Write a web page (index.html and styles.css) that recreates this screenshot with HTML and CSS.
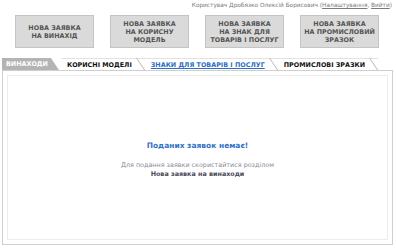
FILE: index.html
```html
<!DOCTYPE html>
<html lang="uk">
<head>
    <meta charset="UTF-8">
    <title>Заявки</title>
    <link rel="stylesheet" href="styles.css">
</head>
<body>
    <!-- шапка користувача -->
    <div class="user-bar">
        Користувач Дробязко Олексій Борисович (<a href="#">Налаштування</a>, <a href="#">Вийти</a>)
    </div>

    <!-- кнопки нових заявок -->
    <div class="new-buttons">
        <a class="new-btn" href="#">Нова заявка<br>на винахід</a>
        <a class="new-btn" href="#">Нова заявка<br>на корисну<br>модель</a>
        <a class="new-btn" href="#">Нова заявка<br>на знак для<br>товарів і послуг</a>
        <a class="new-btn" href="#">Нова заявка<br>на промисловий<br>зразок</a>
    </div>

    <!-- вкладки -->
    <div class="tabs">
        <span class="tab active">Винаходи</span>
        <span class="tab">Корисні моделі</span>
        <a class="tab link" href="#">Знаки для товарів і послуг</a>
        <span class="tab">Промислові зразки</span>
    </div>

    <div class="panel">
        <div class="empty-title">Поданих заявок немає!</div>
        <div class="empty-hint">Для подання заявки скористайтися розділом</div>
        <div class="empty-link">Нова заявка на винаходи</div>
    </div>
</body>
</html>
```

FILE: styles.css
```css
body {
    margin: 0;
    background: #fff;
    font-family: "DejaVu Sans", Verdana, sans-serif;
    width: 396px;
    height: 248px;
    overflow: hidden;
}

/* шапка */
.user-bar {
    text-align: right;
    font-size: 5.8px;
    color: #7a7a7a;
    padding: 1px 4px 0 0;
    line-height: 8px;
}

.user-bar a {
    color: #7a7a7a;
}

/* кнопки */
.new-buttons {
    display: flex;
    justify-content: center;
    gap: 16px;
    margin-top: 6px;
    padding-right: 2px;
}

.new-btn {
    width: 77px;
    height: 31px;
    display: flex;
    align-items: center;
    justify-content: center;
    text-align: center;
    background: #dadada;
    border: 1px solid #c4c4c4;
    color: #555;
    font-size: 6.4px;
    font-weight: bold;
    line-height: 8px;
    text-transform: uppercase;
    text-decoration: none;
}

/* вкладки */
.tabs {
    display: flex;
    margin: 10px 0 0 2px;
    height: 12px;
}

.tab {
    position: relative;
    font-size: 6.4px;
    font-weight: bold;
    text-transform: uppercase;
    color: #111;
    line-height: 12px;
    padding: 0 13px 0 6px;
    border-top: 1px solid #e2e2e2;
    box-sizing: border-box;
    text-decoration: none;
    white-space: nowrap;
}

.tab::after {
    content: '';
    position: absolute;
    top: -1px;
    bottom: 0;
    right: 0;
    width: 8px;
    border-left: 1px solid #b8b8b8;
    transform: skewX(34deg);
    transform-origin: top left;
}

.tab.active {
    background: #b4b4b4;
    color: #fff;
    border-top: none;
    padding-left: 4px;
    clip-path: polygon(0 0, calc(100% - 10px) 0, calc(100% - 2px) 100%, 0 100%);
}

.tab.active::after {
    display: none;
}

.tab.link {
    color: #2f6fc2;
    text-decoration: underline;
}

/* панель */
.panel {
    margin: 0 3px 0 2px;
    height: 175px;
    border: 1px solid #cfcfcf;
    box-shadow: inset 0 0 0 4px #fff, inset 0 0 0 5px #ececec;
    text-align: center;
    padding-top: 70px;
    box-sizing: border-box;
}

.empty-title {
    color: #2f73c6;
    font-weight: bold;
    font-size: 7.5px;
    margin-bottom: 11px;
}

.empty-hint {
    color: #8a8a9a;
    font-size: 6.4px;
    line-height: 9px;
}

.empty-link {
    color: #4a4a5a;
    font-weight: bold;
    font-size: 6.4px;
    line-height: 9px;
}
```
